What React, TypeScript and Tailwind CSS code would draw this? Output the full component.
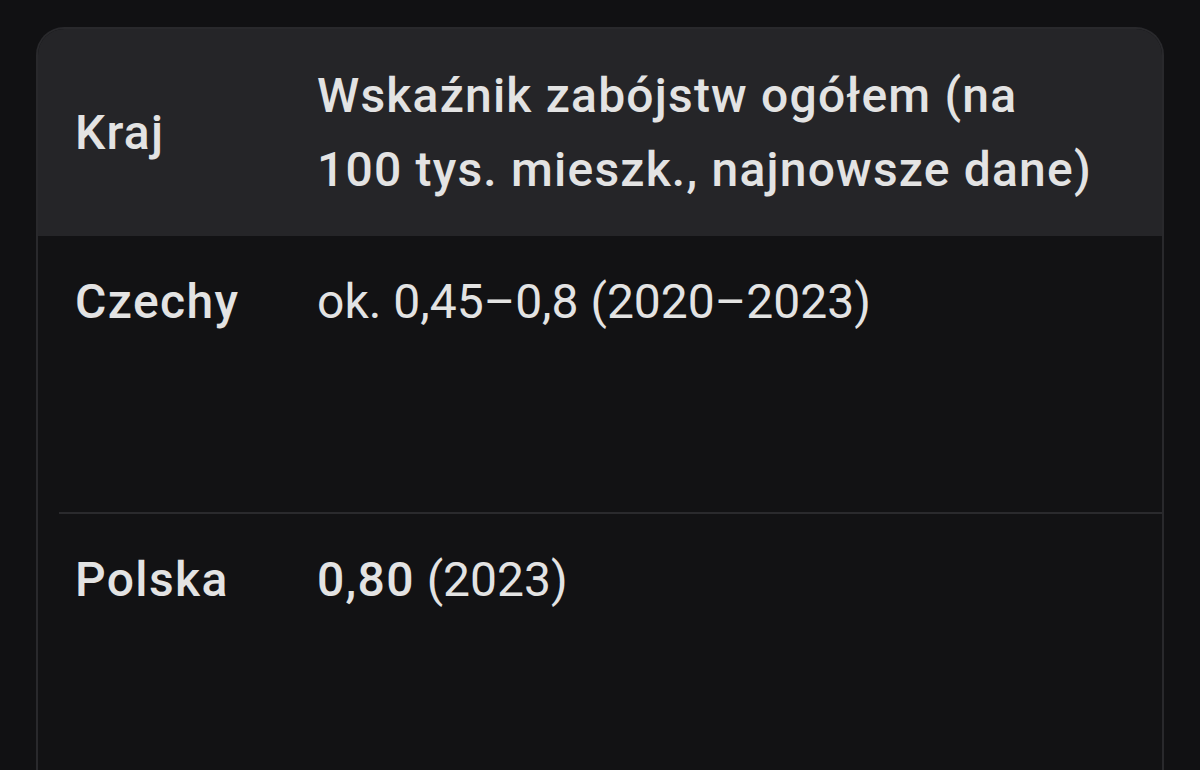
export default function App() {
  const rows = [
    {
      country: "Czechy",
      value: <span>ok. 0,45–0,8 (2020–2023)</span>,
    },
    {
      country: "Polska",
      value: (
        <span>
          <span className="font-medium tracking-[1.3px]">0,80</span> (2023)
        </span>
      ),
    },
  ];

  return (
    <div
      className="h-[770px] overflow-hidden bg-[#111113] pt-[27px] pl-[36px] text-[48px] leading-[74px] text-[#e3e3e3]"
      style={{ fontFamily: "Roboto, 'Noto Sans', sans-serif" }}
    >
      {/* table card, clipped at the bottom of the screen */}
      <div className="w-[1128px] h-[800px] overflow-hidden rounded-t-[28px] border-2 border-b-0 border-[#29292c] bg-[#121214]">
        {/* header */}
        <div className="flex h-[207px] items-center bg-[#252528] font-medium tracking-[1.2px]">
          <div className="w-[279px] shrink-0 pl-[37px]">Kraj</div>
          <div className="flex-1">
            Wskaźnik zabójstw ogółem (na
            <br />
            100 tys. mieszk., najnowsze dane)
          </div>
        </div>

        {/* body */}
        {rows.map((row, i) => (
          <div key={row.country}>
            <div className="flex h-[276px] items-start pt-[29px]">
              <div className="w-[279px] shrink-0 pl-[37px] font-medium tracking-[1.4px]">
                {row.country}
              </div>
              <div className="flex-1">{row.value}</div>
            </div>
            {i === 0 && <div className="ml-[21px] h-[2px] bg-[#2a2a2d]" />}
          </div>
        ))}
      </div>
    </div>
  );
}
